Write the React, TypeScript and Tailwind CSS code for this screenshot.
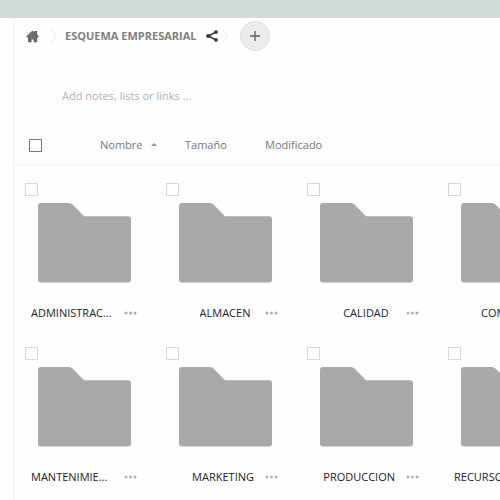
import { useState } from "react"

interface Folder {
  id: string
  name: string
}

const folders: Folder[] = [
  { id: "administracion", name: "ADMINISTRACION" },
  { id: "almacen", name: "ALMACEN" },
  { id: "calidad", name: "CALIDAD" },
  { id: "compras", name: "COMPRAS" },
  { id: "mantenimiento", name: "MANTENIMIENTO" },
  { id: "marketing", name: "MARKETING" },
  { id: "produccion", name: "PRODUCCION" },
  { id: "recursos", name: "RECURSOS HUMANOS" },
]

function HomeIcon() {
  return (
    <svg viewBox="0 0 13 13" className="h-[13px] w-[13px]" fill="#6b6b6b">
      <path d="M6.5 0.6 8.200 2.200V1h3v3.800l1.600 1.800-.5 1H11.200v4.600H7.600V9.600H5.600v2.600H2V7.600H.7L.2 6.600Z" />
    </svg>
  )
}

function ShareIcon() {
  return (
    <svg viewBox="0 0 12 12" className="h-3 w-3">
      <path d="M10 2 2.400 6 10 10" fill="none" stroke="#3c3c3c" strokeWidth="1.500" />
      <circle cx="10" cy="2.100" r="1.900" fill="#3c3c3c" />
      <circle cx="2.200" cy="6" r="2.100" fill="#3c3c3c" />
      <circle cx="10" cy="9.900" r="1.900" fill="#3c3c3c" />
    </svg>
  )
}

function Separator() {
  return (
    <svg viewBox="0 0 6 16" className="h-4 w-[6px] shrink-0" fill="none" stroke="#ebebeb">
      <path d="M1 1 5 8 1 15" />
    </svg>
  )
}

function FolderIcon() {
  return (
    <svg viewBox="0 0 93 80" className="h-20 w-[93px]" fill="#a9a9a9">
      <path d="M3 0H31Q33 0 34.500 1.500L46 13.300H90Q93 13.300 93 16.300V76.500Q93 79.500 90 79.500H3Q0 79.500 0 76.500V3Q0 0 3 0Z" />
    </svg>
  )
}

function Breadcrumbs() {
  return (
    <nav className="flex h-9 items-center pl-[11px]">
      <a href="#" aria-label="Inicio">
        <HomeIcon />
      </a>
      <div className="ml-3">
        <Separator />
      </div>
      <a href="#" className="ml-2 whitespace-nowrap text-[11px] font-bold text-[#808080]">
        ESQUEMA EMPRESARIAL
      </a>
      <button aria-label="Compartir" className="ml-[10px]">
        <ShareIcon />
      </button>
      <div className="ml-1">
        <Separator />
      </div>
      <button
        aria-label="Nuevo"
        className="ml-3 flex h-[30px] w-[30px] items-center justify-center rounded-full border border-[#dedede] bg-[#ececec]"
      >
        <svg viewBox="0 0 10 10" className="h-[10px] w-[10px]" stroke="#5c5c5c" strokeWidth="1.300">
          <path d="M5 0V10M0 5H10" />
        </svg>
      </button>
    </nav>
  )
}

interface FolderTileProps {
  folder: Folder
  checked: boolean
  onToggle: () => void
}

function FolderTile({ folder, checked, onToggle }: FolderTileProps) {
  return (
    <li className="h-[164px] pl-[10px] pt-[17px]">
      <input
        type="checkbox"
        aria-label={folder.name}
        checked={checked}
        onChange={onToggle}
        className="block h-[13px] w-[13px] appearance-none border border-[#d8d8d8] bg-white checked:bg-[#a9a9a9]"
      />
      <a href="#" aria-label={folder.name} className="ml-[13px] mt-[7px] block">
        <FolderIcon />
      </a>
      {/* the name stays centred under the folder until it runs into the menu button */}
      <div className="ml-[6px] mt-[22px] flex w-[106px] items-center">
        <div className="flex-1" />
        <a href="#" className="max-w-[82px] truncate text-[11px] leading-4 text-[#222222]">
          {folder.name}
        </a>
        <div className="flex min-w-6 flex-1 justify-end">
          <button aria-label="Acciones">
            <svg viewBox="0 0 13 4" className="h-1 w-[13px]" fill="#b0b0b0">
              <circle cx="2" cy="2" r="1.500" />
              <circle cx="6.500" cy="2" r="1.500" />
              <circle cx="11" cy="2" r="1.500" />
            </svg>
          </button>
        </div>
      </div>
    </li>
  )
}

export default function App() {
  const [selected, setSelected] = useState<string[]>([])
  const [notes, setNotes] = useState("")

  const toggle = (id: string) => {
    setSelected(prev => (prev.includes(id) ? prev.filter(item => item !== id) : [...prev, id]))
  }

  const allSelected = selected.length === folders.length

  return (
    <div className="flex h-screen flex-col overflow-hidden bg-[#fefefe] font-['Open_Sans',sans-serif]">
      <header className="h-[18px] shrink-0 bg-[#d3dbd8]" />

      <main className="ml-[13px] flex-1 overflow-hidden border-l-2 border-[#f6f7f7]">
        <Breadcrumbs />

        <input
          type="text"
          aria-label="Notas"
          placeholder="Add notes, lists or links ..."
          value={notes}
          onChange={e => setNotes(e.target.value)}
          className="ml-[47px] mt-[34px] block h-4 w-60 text-[11px] text-[#555555] outline-none placeholder:text-[#b0b0b0]"
        />

        <div className="mt-[22px] flex h-10 items-center border-b-2 border-[#f7f7f7] pl-[14px] text-[11px] text-[#777777]">
          <input
            type="checkbox"
            aria-label="Seleccionar todo"
            checked={allSelected}
            onChange={() => setSelected(allSelected ? [] : folders.map(f => f.id))}
            className="h-[13px] w-[13px] appearance-none border border-[#777777] bg-white checked:bg-[#777777]"
          />
          <button className="ml-[58px] flex w-[85px] items-center gap-2">
            Nombre
            <svg viewBox="0 0 6 4" className="h-1 w-[6px]" fill="#9a9a9a">
              <path d="M3 0 6 3H0Z" />
            </svg>
          </button>
          <button className="w-20 text-left">Tamaño</button>
          <button>Modificado</button>
        </div>

        <ul className="grid grid-cols-[repeat(4,141px)]">
          {folders.map(folder => (
            <FolderTile
              key={folder.id}
              folder={folder}
              checked={selected.includes(folder.id)}
              onToggle={() => toggle(folder.id)}
            />
          ))}
        </ul>
      </main>
    </div>
  )
}
